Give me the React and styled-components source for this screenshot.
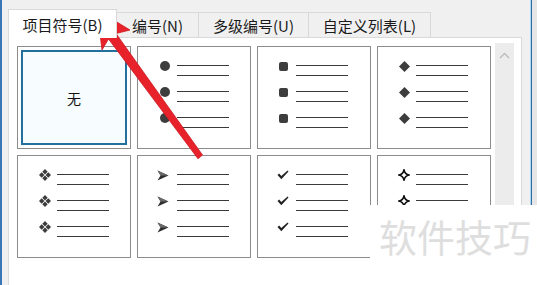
import React from 'react';
import styled, { createGlobalStyle } from 'styled-components';

const Global = createGlobalStyle`
  html, body { margin: 0; padding: 0; }
  body {
    width: 537px;
    height: 285px;
    overflow: hidden;
    background: #f0f0f0;
    font-family: "Noto Sans CJK SC", "Noto Sans", sans-serif;
  }
`;

const Screen = styled.div`
  position: relative;
  display: flex;
  width: 537px;
  height: 285px;
  overflow: hidden;
  background: #f0f0f0;
`;

const EdgeLeft = styled.div`
  width: 2px;
  background: #3a78b5;
  flex: none;
`;

const Gutter = styled.div`
  width: ${p => p.w}px;
  background: ${p => p.bg || '#f0f0f0'};
  flex: none;
`;

const EdgeRight = styled.div`
  width: 2px;
  flex: none;
  background: linear-gradient(90deg, #a9d4ef 0 1px, #2f6ea5 1px 2px);
`;

const Dialog = styled.div`
  display: flex;
  flex-direction: column;
  width: 514px;
  flex: none;
`;

const TabBar = styled.div`
  display: flex;
  align-items: flex-end;
  height: 37px;
  padding-top: 9px;
  box-sizing: border-box;
`;

const Tab = styled.div`
  box-sizing: border-box;
  width: ${p => p.w}px;
  height: ${p => (p.active ? 29 : 25)}px;
  margin-bottom: ${p => (p.active ? -1 : 0)}px;
  display: flex;
  align-items: center;
  justify-content: center;
  padding-top: ${p => (p.active ? 1 : 0)}px;
  background: ${p => (p.active ? '#ffffff' : '#f0f0f0')};
  border: 1px solid #d9d9d9;
  border-bottom: none;
  border-left: ${p => (p.active ? '1px solid #d9d9d9' : 'none')};
  font-size: 15px;
  color: #1a1a1a;
  white-space: nowrap;
  position: relative;
  z-index: ${p => (p.active ? 1 : 0)};
`;

const Panel = styled.div`
  flex: 1;
  display: flex;
  align-items: flex-start;
  background: #ffffff;
  border: 1px solid #d9d9d9;
  border-bottom: none;
  padding: 8px 7px 0 8px;
`;

const Grid = styled.div`
  display: grid;
  grid-template-columns: repeat(4, 114px);
  grid-auto-rows: 103px;
  gap: 6px;
`;

const Card = styled.div`
  box-sizing: border-box;
  border: 1px solid #8c8c8c;
  background: #fff;
  padding: ${p => (p.selected ? '3px' : '13px 0 0 0')};
`;

const Selected = styled.div`
  box-sizing: border-box;
  height: 100%;
  border: 2px solid #23709f;
  background: #f7fdff;
  display: flex;
  align-items: center;
  justify-content: center;
  font-size: 14px;
  color: #111;
`;

const Row = styled.div`
  display: flex;
  height: 26px;
`;

const BulletSlot = styled.div`
  width: 12px;
  height: 12px;
  margin-left: ${p => p.x}px;
  margin-right: ${p => p.gap}px;
  display: flex;
  align-items: center;
  justify-content: center;
`;

const Lines = styled.div`
  display: flex;
  flex-direction: column;
  gap: 9px;
  padding-top: 5px;
`;

const Line = styled.div`
  width: 52px;
  height: 1px;
  background: #3a3a3a;
`;

const Scroll = styled.div`
  width: 19px;
  height: 260px;
  margin: -3px 0 0 4px;
  background: #ececec;
  display: flex;
  justify-content: center;
  padding-top: 9px;
  box-sizing: border-box;
`;

const Overlay = styled.svg`
  position: absolute;
  left: 0;
  top: 0;
  pointer-events: none;
`;

const Watermark = styled.div`
  position: absolute;
  left: 370px;
  top: 205px;
  right: 0;
  bottom: 0;
  background: #ffffff;
  color: #dedede;
  font-size: 38px;
  padding: 8px 0 0 9px;
  box-sizing: border-box;
  line-height: 1.2;
  white-space: nowrap;
`;

const ink = '#3d3d3d';

const bullets = {
  dot: <svg width="10" height="10"><circle cx="5" cy="5" r="5" fill={ink} /></svg>,
  square: <svg width="9" height="9"><rect width="9" height="9" rx="2" fill={ink} /></svg>,
  diamond: <svg width="11" height="11"><path d="M5.5 0 L11 5.5 L5.5 11 L0 5.5 Z" fill={ink} /></svg>,
  quad: (
    <svg width="12" height="12">
      <path d="M6 0 L8.7 2.7 L6 5.4 L3.3 2.7 Z M6 6.6 L8.7 9.3 L6 12 L3.3 9.3 Z M0 6 L2.7 3.3 L5.4 6 L2.7 8.7 Z M6.6 6 L9.3 3.3 L12 6 L9.3 8.7 Z" fill={ink} />
    </svg>
  ),
  arrow: (
    <svg width="12" height="11">
      <path d="M0.5 0.5 L11.5 5.5 L0.5 10.5 L3.5 5.5 Z" fill="#2e2e2e" />
      <path d="M0.5 0.5 L11.5 5.5 L3.5 5.5 Z" fill="#6a6a6a" />
    </svg>
  ),
  check: (
    <svg width="12" height="10">
      <path d="M0.5 5 L2.2 3.6 L4.3 5.9 L10.6 0.4 L11.5 1.4 L4.3 9.2 Z" fill="#222" />
    </svg>
  ),
  star: (
    <svg width="12" height="12">
      <path d="M6 0.8 Q6.8 5.2 11.2 6 Q6.8 6.8 6 11.2 Q5.2 6.8 0.8 6 Q5.2 5.2 6 0.8 Z" fill="#fff" stroke="#111" strokeWidth="1.7" strokeLinejoin="round" />
    </svg>
  ),
};

const cards = [
  { selected: true },
  { kind: 'dot', x: 21, gap: 6 },
  { kind: 'square', x: 19, gap: 7 },
  { kind: 'diamond', x: 20, gap: 6 },
  { kind: 'quad', x: 21, gap: 6 },
  { kind: 'arrow', x: 19, gap: 8 },
  { kind: 'check', x: 19, gap: 7 },
  { kind: 'star', x: 20, gap: 6 },
];

const BulletCard = ({ kind, x, gap }) => (
  <Card>
    {[0, 1, 2].map(i => (
      <Row key={i}>
        <BulletSlot x={x} gap={gap}>{bullets[kind]}</BulletSlot>
        <Lines>
          <Line />
          <Line />
        </Lines>
      </Row>
    ))}
  </Card>
);

const tabs = [
  { label: '项目符号(B)', w: 109 },
  { label: '编号(N)', w: 82 },
  { label: '多级编号(U)', w: 110 },
  { label: '自定义列表(L)', w: 122 },
];

export default function App() {
  return (
    <Screen>
      <Global />
      <EdgeLeft />
      <Gutter w={6} />
      <Dialog>
        <TabBar>
          {tabs.map((t, i) => (
            <Tab key={t.label} w={t.w} active={i === 0}>{t.label}</Tab>
          ))}
        </TabBar>
        <Panel>
          <Grid>
            {cards.map((c, i) =>
              c.selected ? (
                <Card key={i} selected>
                  <Selected>无</Selected>
                </Card>
              ) : (
                <BulletCard key={i} {...c} />
              )
            )}
          </Grid>
          <Scroll>
            <svg width="11" height="7">
              <path d="M1 6 L5.5 1.5 L10 6" fill="none" stroke="#bcbcbc" strokeWidth="1.3" />
            </svg>
          </Scroll>
        </Panel>
      </Dialog>
      <Gutter w={8} />
      <EdgeRight />
      <Gutter w={5} bg="#e6e6e6" />

      <Overlay width="537" height="285">
        <path
          d="M97 10 L130 30 L116 33.5 L202.5 155 L198 158.8 L108.5 39 L102 50 Z"
          fill="#e8222a"
          stroke="#cc1a22"
          strokeWidth="0.8"
          strokeLinejoin="round"
        />
      </Overlay>
      <Watermark>软件技巧</Watermark>
    </Screen>
  );
}
